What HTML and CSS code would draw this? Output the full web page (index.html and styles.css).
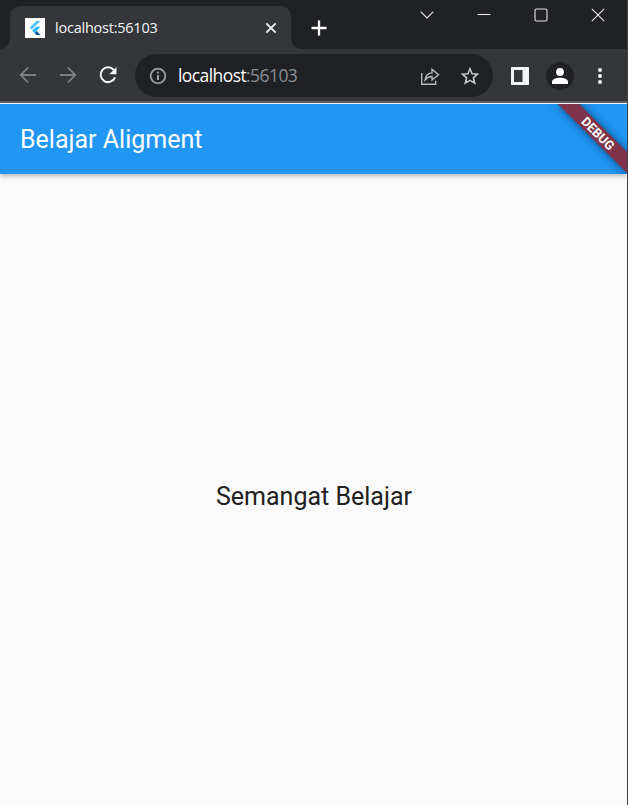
FILE: index.html
```html
<!DOCTYPE html>
<html lang="id">
<head>
<meta charset="utf-8">
<title>Belajar Aligment</title>
<link rel="stylesheet" href="styles.css">
</head>
<body>
<div class="window">
  <header class="tabstrip">
    <div class="tab">
      <svg class="favicon" width="20" height="20" viewBox="0 0 20 20"><path fill="#fff" d="M0 0h20v20H0z"/><path fill="#54c5f8" d="M11.3 3h4.2L6.8 11.6 4.6 9.500z"/><path fill="#29b6f6" d="M11.3 8.800h4.200L9.600 15l-2.500-2.200z"/><path fill="#01579b" d="M9.600 15l2.200-2.100 3.700 4.100h-4.200z"/></svg>
      <span class="tab-title">localhost:56103</span>
      <svg class="tab-close" width="12" height="12" viewBox="0 0 12 12"><path d="M1.3 1.3l9.4 9.4M10.7 1.3l-9.4 9.4" stroke="#f1f3f4" stroke-width="1.8"/></svg>
    </div>
    <svg class="new-tab" width="16" height="16" viewBox="0 0 16 16"><path d="M8 .5v15M.5 8h15" stroke="#fff" stroke-width="2.3"/></svg>
    <div class="controls">
      <svg width="14" height="14" viewBox="0 0 14 14"><path d="M.7 3.7L7 10l6.300-6.300"/></svg>
      <svg width="14" height="14" viewBox="0 0 14 14"><path d="M.5 6.500h13"/></svg>
      <svg width="14" height="14" viewBox="0 0 14 14"><rect x="1" y="1" width="12" height="12" rx="1.5"/></svg>
      <svg width="14" height="14" viewBox="0 0 14 14"><path d="M.8.8l12.400 12.400M13.200.8L.8 13.200"/></svg>
    </div>
  </header>
  <nav class="toolbar">
    <svg class="nav-icon dim" viewBox="0 0 20 20"><path d="M18 10H3M10 2.700L2.700 10l7.300 7.300"/></svg>
    <svg class="nav-icon dim" viewBox="0 0 20 20"><path d="M2 10h15M10 2.700l7.300 7.300-7.300 7.300"/></svg>
    <svg class="nav-icon" viewBox="0 0 20 20"><path d="M15.800 5A7.400 7.400 0 1 0 17 12.300" stroke-width="2"/><path d="M18.500 2v7.200h-7.200z" fill="#f1f3f4" stroke="none"/></svg>
    <div class="address">
      <svg class="info" width="18" height="18" viewBox="0 0 18 18"><circle cx="9" cy="9" r="7.300" fill="none" stroke="#9aa0a6" stroke-width="1.800"/><path d="M9 8v5M9 4.800v1.800" stroke="#9aa0a6" stroke-width="2"/></svg>
      <span class="url">localhost<span class="port">:56103</span></span>
      <svg class="share" width="20" height="20" viewBox="0 0 20 20"><path d="M1.700 7v11.200h14v-3.500M5.200 13.800c.6-4.700 3.300-6.700 6.800-6.900V3.300l6.500 5.400-6.500 5.300v-3.500c-2.900.1-4.900.9-6.800 3.300z" fill="none" stroke="#b5b8bc" stroke-width="1.400"/></svg>
      <svg class="star" width="18" height="18" viewBox="0 0 18 18"><path d="M9 1.700l2.100 5 5.500.5-4.200 3.600 1.300 5.400L9 13.400l-4.700 2.800 1.300-5.400-4.200-3.600 5.500-.5z" fill="none" stroke="#c4c7ca" stroke-width="1.600"/></svg>
    </div>
    <svg class="panel" width="18" height="18" viewBox="0 0 18 18"><path fill="#f1f3f4" fill-rule="evenodd" d="M0 0h18v18H0zM3 3v12h8.500V3z"/></svg>
    <div class="avatar"><svg width="16" height="16" viewBox="0 0 16 16" fill="#fff"><circle cx="8" cy="4" r="3.900"/><path d="M0 16v-2.200C0 11 4.500 9.700 8 9.700s8 1.300 8 4.100V16z"/></svg></div>
    <svg class="more" width="4" height="16" viewBox="0 0 4 16" fill="#f1f3f4"><circle cx="2" cy="2" r="2"/><circle cx="2" cy="8" r="2"/><circle cx="2" cy="14" r="2"/></svg>
  </nav>
  <div class="page">
    <div class="appbar"><h1>Belajar Aligment</h1></div>
    <main>Semangat Belajar</main>
    <div class="banner-clip"><div class="banner">DEBUG</div></div>
  </div>
</div>
</body>
</html>
```
FILE: styles.css
```css
* { box-sizing: border-box; }
body { margin: 0; background: #202124; }
.window {
  width: 628px;
  height: 805px;
  display: flex;
  flex-direction: column;
  border-right: 1px solid #434347;
  overflow: hidden;
}
svg { flex: none; display: block; }

.tabstrip {
  height: 49px;
  flex: none;
  display: flex;
  align-items: flex-start;
  background: #202124;
  padding-left: 10px;
}
.tab {
  position: relative;
  width: 281px;
  height: 43px;
  margin-top: 6px;
  padding: 0 14px 0 15px;
  display: flex;
  align-items: center;
  background: #35363a;
  border-radius: 10px 10px 0 0;
}
.tab::before, .tab::after {
  content: "";
  position: absolute;
  bottom: 0;
  width: 10px;
  height: 10px;
}
.tab::before { left: -10px; background: radial-gradient(circle at 0 0, transparent 9.5px, #35363a 10px); }
.tab::after { right: -10px; background: radial-gradient(circle at 100% 0, transparent 9.5px, #35363a 10px); }
.tab-title {
  flex: 1;
  margin-left: 10px;
  font: 14.5px/20px "Open Sans", sans-serif;
  letter-spacing: -0.23px;
  color: #f1f3f4;
}
.new-tab { margin: 20px 0 0 20px; }
.controls {
  display: flex;
  gap: 43px;
  margin: 8px 0 0 auto;
  padding-right: 22px;
  fill: none;
  stroke: #e8e8e8;
  stroke-width: 1.1;
}

.toolbar {
  height: 55px;
  flex: none;
  display: flex;
  align-items: center;
  padding: 0 25px 1px 18px;
  background: #35363a;
  border-bottom: 1px solid #fff;
  box-shadow: inset 0 -2px #5f6064;
}
.nav-icon { width: 20px; height: 20px; margin-right: 20px; margin-bottom: 1px; fill: none; stroke: #f1f3f4; stroke-width: 1.8; }
.nav-icon.dim { stroke: #7d7e82; }
.address {
  width: 358px;
  height: 43px;
  margin-left: -3px;
  padding: 0 14px;
  display: flex;
  align-items: center;
  background: #202124;
  border-radius: 22px;
}
.url {
  flex: 1;
  margin-left: 11px;
  padding-bottom: 1px;
  font: 17.5px/24px "Open Sans", sans-serif;
  letter-spacing: -0.58px;
  color: #fff;
}
.port { color: #8b8e92; }
.share { margin-right: 21px; }
.panel { margin-left: 18px; }
.avatar {
  width: 28px;
  height: 28px;
  margin-left: 17px;
  display: flex;
  align-items: center;
  justify-content: center;
  border-radius: 50%;
  background: #202124;
}
.more { margin-left: auto; }

.page {
  position: relative;
  flex: 1;
  display: flex;
  flex-direction: column;
  background: #fafafa;
  font-family: Roboto, sans-serif;
}
.appbar {
  height: 70px;
  display: flex;
  align-items: center;
  padding-left: 20px;
  background: #2196f3;
  box-shadow: 0 2px 5px rgba(0, 0, 0, 0.28);
}
h1 { margin: 0; font-size: 25px; font-weight: 400; color: #fff; }
main {
  flex: 1;
  display: flex;
  align-items: center;
  justify-content: center;
  padding: 13px 0 0 1px;
  font-size: 25px;
  color: #212121;
}
.banner-clip {
  position: absolute;
  top: 0;
  right: 0;
  width: 90px;
  height: 90px;
  overflow: hidden;
}
.banner {
  position: absolute;
  left: 11px;
  top: 22px;
  width: 100px;
  height: 15px;
  transform: rotate(45deg);
  background: #7f344b;
  box-shadow: 0 0 10px rgba(0, 0, 0, 0.5);
  color: #fff;
  font-size: 12.75px;
  line-height: 15px;
  font-weight: 700;
  text-align: center;
}
/* The ribbon and its shadow end at the bottom of the app bar. */
.banner-clip { height: 70px; }
```
